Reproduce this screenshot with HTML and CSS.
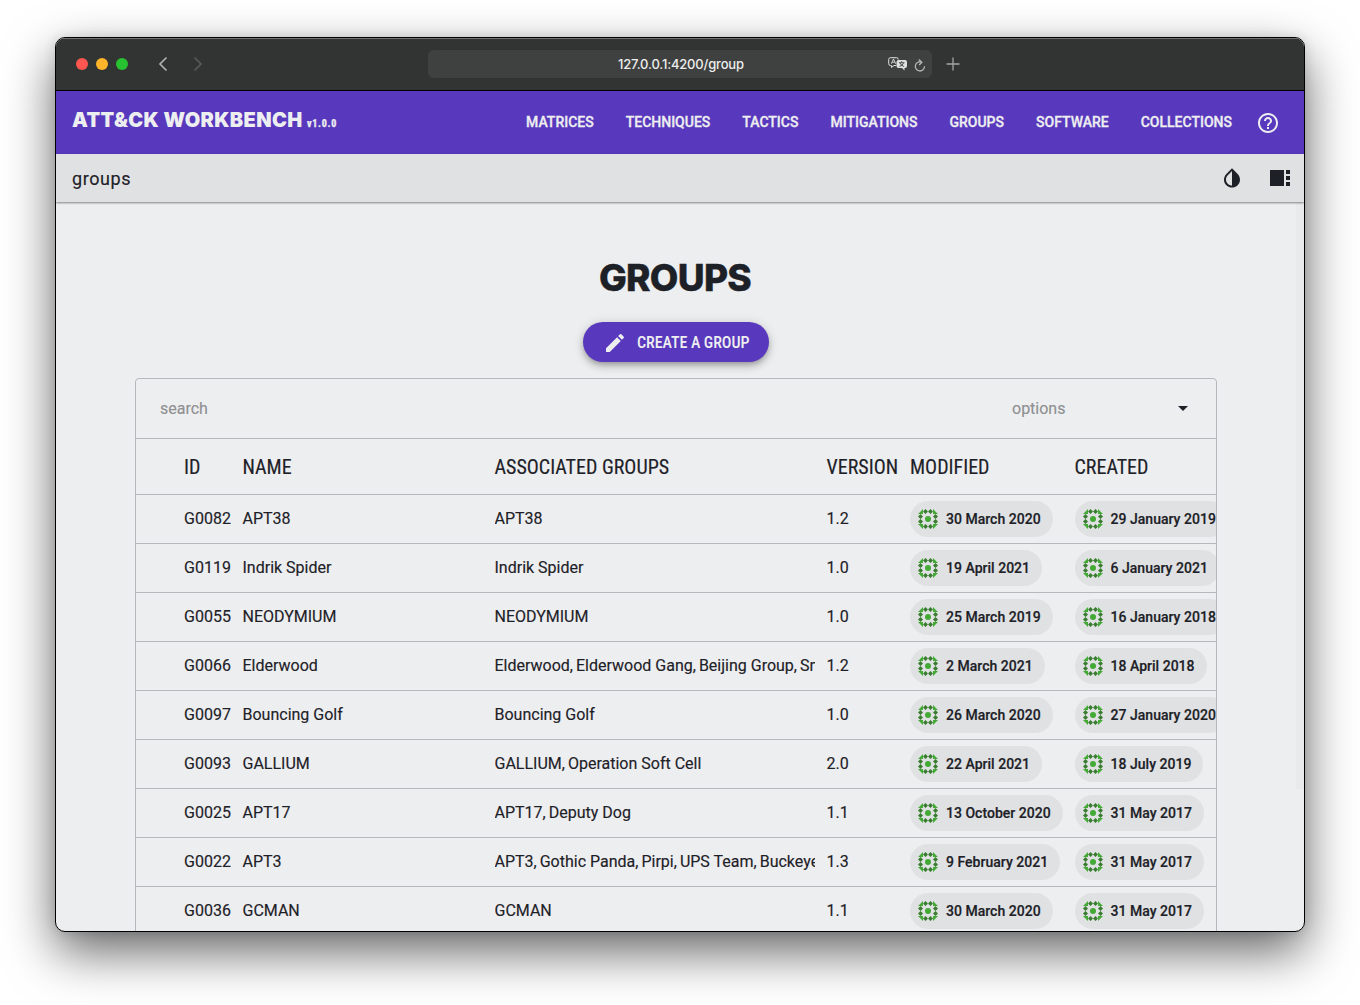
FILE: index.html
```html
<!DOCTYPE html>
<html lang="en">
<head>
<meta charset="utf-8">
<title>ATT&amp;CK Workbench</title>
<link rel="stylesheet" href="styles.css">
</head>
<body>
<svg width="0" height="0" class="defs" aria-hidden="true">
  <defs>
    <symbol id="avatar" viewBox="0 0 20 20">
      <g fill="#43ab35">
        <circle cx="10" cy="10" r="3"/>
        <path d="M0 5 5 0V5ZM20 5 15 0V5ZM0 15 5 20V15ZM20 15 15 20V15Z"/>
      </g>
      <path fill="#3a7d30" d="M7.5 0 10 2.5 7.5 5 5 2.5ZM12.5 0 15 2.5 12.5 5 10 2.5ZM7.5 15 10 17.5 7.5 20 5 17.5ZM12.5 15 15 17.5 12.5 20 10 17.5ZM2.500 5 5 7.500 2.500 10 0 7.500ZM2.500 10 5 12.500 2.500 15 0 12.500ZM17.500 5 20 7.500 17.500 10 15 7.500ZM17.500 10 20 12.500 17.500 15 15 12.500Z"/>
    </symbol>
  </defs>
</svg>
<div class="window">
  <header class="titlebar">
    <div class="lights"><i class="red"></i><i class="amber"></i><i class="green"></i></div>
    <div class="arrows">
      <svg width="10" height="16" viewBox="0 0 10 16"><path d="M8.500 1.500 2 8l6.500 6.500" fill="none" stroke="#b4b5b4" stroke-width="1.600"/></svg>
      <svg width="10" height="16" viewBox="0 0 10 16"><path d="M1.500 1.500 8 8l-6.500 6.500" fill="none" stroke="#595a59" stroke-width="1.600"/></svg>
    </div>
    <div class="address">
      <span class="url">127.0.0.1:4200/group</span>
      <svg class="translate" width="20" height="14" viewBox="0 0 20 14">
        <path d="M8 8.500H6L3.500 10.500V8.500H2.500Q.7 8.500 .7 6.700V2.500Q.7.700 2.500.700H8.500Q10.300.700 10.300 2.500" fill="none" stroke="#dedfde"/>
        <path d="M3.300 6.800 5.500 1.900 7.700 6.800M4.100 5.200H6.900" fill="none" stroke="#dedfde" stroke-width=".9"/>
        <path d="M10.500 3H17Q19 3 19 5V9Q19 11 17 11H16.500V13.500L14 11H10.500Q8.500 11 8.500 9V5Q8.500 3 10.500 3Z" fill="#dedfde"/>
        <path d="M13.700 4.200V5.500M11 5.700H16.500M12 6Q13 8.500 16 9.500M15.500 6Q14.500 8.500 11.500 9.500" fill="none" stroke="#3f4140" stroke-width=".9"/>
      </svg>
      <svg class="reload" width="12" height="13" viewBox="0 0 12 13"><path d="M7.800 3.200A4.600 4.600 0 1 0 10.500 7.200M4.800 .5 7.900 3.200 5.200 6" fill="none" stroke="#b4b5b4" stroke-width="1.300"/></svg>
    </div>
    <svg class="plus" width="14" height="14" viewBox="0 0 14 14"><path d="M7 .5V13.500M.5 7H13.500" stroke="#a4a5a4" stroke-width="1.300"/></svg>
  </header>

  <nav class="navbar">
    <div class="brand"><span class="brand-name">ATT&amp;CK WORKBENCH</span><span class="brand-version">v1.0.0</span></div>
    <div class="links">
      <a>MATRICES</a><a>TECHNIQUES</a><a>TACTICS</a><a>MITIGATIONS</a><a>GROUPS</a><a>SOFTWARE</a><a>COLLECTIONS</a>
    </div>
    <svg class="help" width="24" height="24" viewBox="0 0 24 24" fill="#edeef0"><path d="M11 18h2v-2h-2v2zm1-16C6.480 2 2 6.480 2 12s4.480 10 10 10 10-4.480 10-10S17.520 2 12 2zm0 18c-4.410 0-8-3.590-8-8s3.590-8 8-8 8 3.590 8 8-3.590 8-8 8zm0-14c-2.210 0-4 1.790-4 4h2c0-1.100.9-2 2-2s2 .9 2 2c0 2-3 1.750-3 5h2c0-2.250 3-2.500 3-5 0-2.210-1.790-4-4-4z"/></svg>
  </nav>

  <div class="crumbs">
    <span class="crumb">groups</span>
    <svg width="24" height="24" viewBox="0 0 24 24" fill="#1d2127"><path d="M17.660 7.930 12 2.270 6.340 7.930c-3.120 3.120-3.120 8.190 0 11.310C7.900 20.800 9.950 21.580 12 21.580s4.100-.78 5.660-2.340c3.120-3.120 3.120-8.190 0-11.310zM12 19.590c-1.600 0-3.110-.62-4.240-1.760C6.620 16.690 6 15.190 6 13.590s.62-3.110 1.760-4.240L12 5.100v14.490z"/></svg>
    <svg width="24" height="24" viewBox="0 0 24 24" fill="#1d2127"><path d="M2 4h14v16H2zM18 4h4v4h-4zM18 10h4v4h-4zM18 16h4v4h-4z"/></svg>
  </div>

  <main class="page">
    <div class="scrolltrack"></div>
    <h1>GROUPS</h1>
    <button class="create">
      <svg width="24" height="24" viewBox="0 0 24 24" fill="#edeef0"><path d="M3 17.250V21h3.750L17.810 9.940l-3.750-3.750L3 17.250zM20.710 7.040a1 1 0 0 0 0-1.410l-2.340-2.340a1 1 0 0 0-1.410 0l-1.830 1.830 3.750 3.750 1.830-1.830z"/></svg>
      <span>CREATE A GROUP</span>
    </button>
    <section class="list">
      <div class="filters"><span class="search">search</span><span class="options">options</span><i class="caret"></i></div>
      <div class="row head"><span>ID</span><span>NAME</span><span>ASSOCIATED GROUPS</span><span>VERSION</span><span>MODIFIED</span><span>CREATED</span></div>
      <div class="row"><span>G0082</span><span>APT38</span><span class="names"><b>APT38</b></span><span>1.2</span><span class="chip"><svg><use href="#avatar"/></svg>30 March 2020</span><span class="chip"><svg><use href="#avatar"/></svg>29 January 2019</span></div>
      <div class="row"><span>G0119</span><span>Indrik Spider</span><span class="names"><b>Indrik Spider</b></span><span>1.0</span><span class="chip"><svg><use href="#avatar"/></svg>19 April 2021</span><span class="chip"><svg><use href="#avatar"/></svg>6 January 2021</span></div>
      <div class="row"><span>G0055</span><span>NEODYMIUM</span><span class="names"><b>NEODYMIUM</b></span><span>1.0</span><span class="chip"><svg><use href="#avatar"/></svg>25 March 2019</span><span class="chip"><svg><use href="#avatar"/></svg>16 January 2018</span></div>
      <div class="row"><span>G0066</span><span>Elderwood</span><span class="names"><b>Elderwood,</b><b>Elderwood Gang,</b><b>Beijing Group,</b><b>Sn</b></span><span>1.2</span><span class="chip"><svg><use href="#avatar"/></svg>2 March 2021</span><span class="chip"><svg><use href="#avatar"/></svg>18 April 2018</span></div>
      <div class="row"><span>G0097</span><span>Bouncing Golf</span><span class="names"><b>Bouncing Golf</b></span><span>1.0</span><span class="chip"><svg><use href="#avatar"/></svg>26 March 2020</span><span class="chip"><svg><use href="#avatar"/></svg>27 January 2020</span></div>
      <div class="row"><span>G0093</span><span>GALLIUM</span><span class="names"><b>GALLIUM,</b><b>Operation Soft Cell</b></span><span>2.0</span><span class="chip"><svg><use href="#avatar"/></svg>22 April 2021</span><span class="chip"><svg><use href="#avatar"/></svg>18 July 2019</span></div>
      <div class="row"><span>G0025</span><span>APT17</span><span class="names"><b>APT17,</b><b>Deputy Dog</b></span><span>1.1</span><span class="chip"><svg><use href="#avatar"/></svg>13 October 2020</span><span class="chip"><svg><use href="#avatar"/></svg>31 May 2017</span></div>
      <div class="row"><span>G0022</span><span>APT3</span><span class="names"><b>APT3,</b><b>Gothic Panda,</b><b>Pirpi,</b><b>UPS Team,</b><b>Buckeye</b></span><span>1.3</span><span class="chip"><svg><use href="#avatar"/></svg>9 February 2021</span><span class="chip"><svg><use href="#avatar"/></svg>31 May 2017</span></div>
      <div class="row"><span>G0036</span><span>GCMAN</span><span class="names"><b>GCMAN</b></span><span>1.1</span><span class="chip"><svg><use href="#avatar"/></svg>30 March 2020</span><span class="chip"><svg><use href="#avatar"/></svg>31 May 2017</span></div>
    </section>
  </main>
</div>
</body>
</html>
```
FILE: styles.css
```css
* { box-sizing: border-box; }
body { margin: 0; height: 1005px; overflow: hidden; background: #fff; font-family: Roboto, sans-serif; color: #1d2127; padding: 37px 55px; }
svg { flex: none; display: block; }
.defs { position: absolute; }

.window { width: 1250px; height: 895px; border: 1px solid #000; border-radius: 10px; overflow: hidden; display: flex; flex-direction: column; background: #edeef0; box-shadow: 0 20px 50px rgba(0,0,0,.6), 0 0 12px rgba(0,0,0,.12); }

.titlebar { flex: none; height: 53px; background: #323433; border-bottom: 1px solid #000; box-shadow: inset 0 1px 0 #717271; display: flex; align-items: center; padding-left: 20px; }
.lights { display: flex; gap: 8px; width: 82px; }
.lights i { width: 12px; height: 12px; border-radius: 50%; }
.red { background: #ff5650; }
.amber { background: #ffb429; }
.green { background: #28c231; }
.arrows { display: flex; gap: 25px; width: 270px; }
.address { width: 504px; height: 28px; border-radius: 6px; background: #3f4140; display: flex; align-items: center; padding-left: 190px; }
.url { width: 270px; font: 500 13px Inter, sans-serif; letter-spacing: -.17px; color: #edeeed; white-space: nowrap; }
.reload { margin-left: 6px; margin-top: 2px; }
.plus { margin-left: 14px; margin-top: -1px; }

.navbar { flex: none; height: 63px; background: #5838bd; color: #edeef0; display: flex; align-items: center; padding: 0 24px 0 16px; }
.brand { flex: 1; display: flex; align-items: baseline; white-space: nowrap; margin-top: -6px; }
.brand-name { font: 900 20px Inter, sans-serif; width: 235px; letter-spacing: .38px; }
.brand-version { font-size: 10px; font-weight: 800; font-stretch: 75%; letter-spacing: .7px; -webkit-text-stroke: .25px #edeef0; }
.links { display: flex; gap: 32px; font-size: 14px; font-weight: 500; margin-right: 24px; margin-top: -2px; -webkit-text-stroke: .3px #edeef0; }

.crumbs { flex: none; height: 48px; background: #e0e1e3; display: flex; align-items: center; gap: 24px; padding: 0 12px 0 16px; box-shadow: 0 1px 2px rgba(0,0,0,.45); position: relative; z-index: 1; }
.crumb { flex: 1; font-size: 18px; letter-spacing: .6px; padding-top: 1px; -webkit-text-stroke: .15px #1d2127; }

.page { flex: 1; min-height: 0; position: relative; display: flex; flex-direction: column; align-items: center; padding: 51px 88px 0 80px; }
.scrolltrack { position: absolute; right: 0; top: 0; width: 8px; height: 587px; background: #e9eaec; }
h1 { margin: 0 2px 0 0; font: 800 37px/50px Inter, sans-serif; letter-spacing: -.7px; -webkit-text-stroke: .4px #1d2127; }
.create { flex: none; margin: 19px 0 16px; width: 186px; height: 40px; border: 0; border-radius: 20px; background: #5838bd; color: #edeef0; display: flex; align-items: center; gap: 10px; padding: 0 0 0 20px; font: 500 16px Roboto, sans-serif; font-stretch: 75%; white-space: nowrap; box-shadow: 0 3px 5px -1px rgba(0,0,0,.2), 0 5px 8px rgba(0,0,0,.14), 0 1px 12px rgba(0,0,0,.12); }
.create svg { margin-top: 1px; }
.create span { letter-spacing: -.05px; }
.list { flex: none; align-self: stretch; margin-left: -1px; width: 1082px; height: 700px; border: 1px solid #b7b8bb; border-radius: 4px; overflow: hidden; }
.filters { height: 60px; display: flex; align-items: center; border-bottom: 1px solid #b7b8bb; padding: 0 28px 0 24px; color: #8f9091; font-size: 16px; -webkit-text-stroke: .15px #8f9091; }
.search { width: 852px; }
.options { flex: 1; }
.caret { border: 5px solid transparent; border-top-color: #1d2127; border-bottom: 0; }
.row { height: 49px; border-bottom: 1px solid #b7b8bb; display: grid; grid-template-columns: 58.500px 252px 332px 83.500px 164.500px 200px; align-items: center; padding-left: 48px; font-size: 16px; white-space: nowrap; -webkit-text-stroke: .15px #1d2127; }
.row > span:not(.chip) { padding-bottom: 2px; }
.row.head { height: 56px; font-size: 20px; font-stretch: 75%; }
.row.head > span:not(.chip) { padding: 0; }
.names { display: flex; gap: 3px; width: 320px; overflow: hidden; }
.names b { font-weight: 400; }
.chip { justify-self: start; height: 36px; border-radius: 18px; background: #e0e1e3; display: flex; align-items: center; gap: 8px; padding: 0 12px 0 8px; font-size: 14px; font-weight: 500; letter-spacing: .02px; -webkit-text-stroke: .2px #1d2127; }
.chip svg { width: 20px; height: 20px; -webkit-text-stroke: 0; }
```
